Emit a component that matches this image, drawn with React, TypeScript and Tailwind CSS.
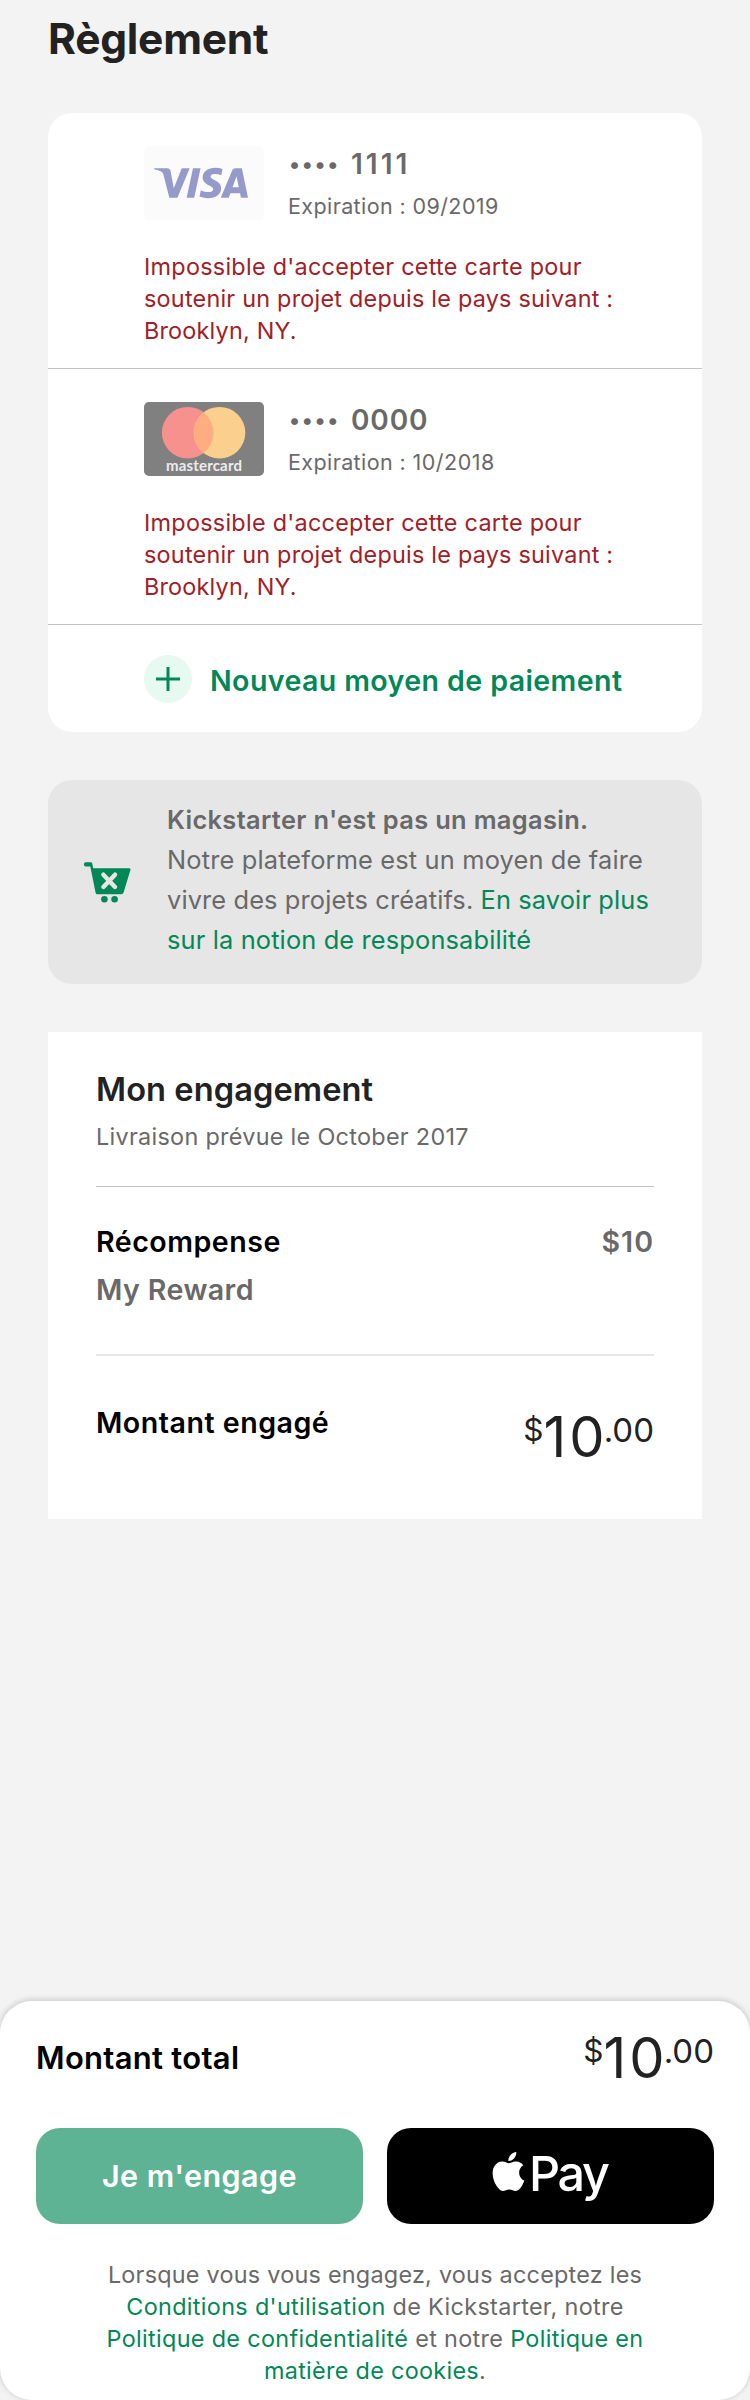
import React from "react";
import { SiApple, SiVisa } from "react-icons/si";

function VisaCard() {
  return (
    <div className="flex h-[74px] w-[120px] shrink-0 items-center justify-center rounded-[5px] bg-[#fbfbfb]">
      <SiVisa size={94} className="translate-x-[-3px] text-[#959aca]" />
    </div>
  );
}

function MastercardCard() {
  return (
    <svg width="120" height="74" viewBox="0 0 120 74" className="shrink-0">
      <rect width="120" height="74" rx="5" fill="#808080" />
      <circle cx="43.7" cy="30.7" r="25.8" fill="#f7918e" />
      <circle cx="75.5" cy="30.7" r="25.8" fill="#fbcf8d" />
      <path d="M59.6 10.4 A25.8 25.8 0 0 1 59.6 51 A25.8 25.8 0 0 1 59.6 10.4 Z" fill="#ffad80" />
      <text
        x="22"
        y="69"
        textLength="76"
        fill="#ececec"
        className="font-['Lato','Inter',sans-serif] text-[15px] font-bold"
      >
        mastercard
      </text>
    </svg>
  );
}

function CartIcon() {
  return (
    <svg width="47" height="41" viewBox="0 0 47 41" className="mt-[82px] shrink-0">
      <path
        d="M1.7 0.3 H6.8 Q8 0.3 8.3 1.5 L9.2 6.2 H45.2 Q47 6.2 46.5 7.8 L39.6 30.4 Q39 32.2 37.4 32.2 H13.4 Q11.9 32.2 11.6 30.7 L6.3 4.4 H1.7 Q0 4.4 0 2.7 V2 Q0 0.3 1.7 0.3 Z"
        fill="#028858"
      />
      <path d="M19.4 12.7 L31 25 M31 12.7 L19.4 25" stroke="#e6e6e6" strokeWidth="4.4" strokeLinecap="round" />
      <circle cx="20.4" cy="37.2" r="3.3" fill="#028858" />
      <circle cx="30.6" cy="37.2" r="3.3" fill="#028858" />
    </svg>
  );
}

function PaymentMethod({
  logo,
  digits,
  digitsClass,
  expiration,
}: {
  logo: React.ReactNode;
  digits: string;
  digitsClass: string;
  expiration: React.ReactNode;
}) {
  return (
    <div className="h-[256px] border-b border-[#c0c0c0] pt-[33px] pl-24">
      <div className="flex h-[74px] gap-6">
        {logo}
        <div className="pt-px text-[#696969]">
          <div className="flex text-[28px] leading-[34px] font-semibold">
            <span className="w-[63px] pl-px text-[22px] tracking-[1.7px]">••••</span>
            <span className={digitsClass}>{digits}</span>
          </div>
          <div className="mt-[11px] text-[21.5px] leading-[28px] tracking-[0.4px]">Expiration : {expiration}</div>
        </div>
      </div>
      <p className="mt-[31px] text-[23.4px] leading-[32px] text-[#a12027]">
        <span className="tracking-[0.27px]">Impossible d'accepter cette carte pour</span>
        <br />
        <span className="tracking-[0.23px]">soutenir un projet depuis le pays suivant :</span>
        <br />
        <span className="tracking-[0.2px]">Brooklyn, NY.</span>
      </p>
    </div>
  );
}

function Amount() {
  return (
    <div className="flex items-start text-[#222222]">
      <span className="mt-[4px] text-[31.5px] leading-[32px]">$</span>
      <span className="text-[56px] leading-[54px]">
        <span className="tracking-[3px]">1</span>0
      </span>
      <span className="mt-[4px] -ml-px text-[33px] leading-[32px]">.00</span>
    </div>
  );
}

export default function App() {
  return (
    <div className="flex h-[2400px] w-[750px] flex-col overflow-hidden bg-[#f3f3f3] font-['Inter','Liberation_Sans',sans-serif]">
      <main className="flex-1 px-12 pt-[10px]">
        <h1 className="text-[42.5px] leading-[57px] font-bold tracking-[-0.24px] text-[#222222]">Règlement</h1>

        <section className="mt-[46px] h-[619px] rounded-[24px] bg-white">
          <PaymentMethod logo={<VisaCard />} digits="1111" digitsClass="tracking-[3px]" expiration="09/2019" />
          <PaymentMethod
            logo={<MastercardCard />}
            digits="0000"
            digitsClass="tracking-[0.86px]"
            expiration={<span className="tracking-[0.5px]">10/2018</span>}
          />
          <div className="flex gap-[17px] pt-[30px] pl-24 text-[#028858]">
            <div className="flex size-12 items-center justify-center rounded-full bg-[#e6faf1]">
              <svg width="24" height="24" viewBox="0 0 24 24">
                <path d="M12 0 V24 M0 12 H24" stroke="currentColor" strokeWidth="3" />
              </svg>
            </div>
            <span className="mt-[9px] ml-px text-[28.6px] leading-[34px] font-semibold tracking-[0.38px]">
              Nouveau moyen de paiement
            </span>
          </div>
        </section>

        <section className="mt-12 flex h-[204px] rounded-[24px] bg-[#e6e6e6] pl-9">
          <CartIcon />
          <p className="pt-5 pl-9 text-[25.4px] leading-[40px] whitespace-nowrap text-[#696969]">
            <span className="font-semibold tracking-[0.34px]">Kickstarter n'est pas un magasin.</span>
            <br />
            <span className="tracking-[0.16px]">Notre plateforme est un moyen de faire</span>
            <br />
            <span className="tracking-[0.12px]">
              vivre des projets créatifs. <a className="text-[#028858]">En savoir plus</a>
            </span>
            <br />
            <a className="tracking-[0.14px] text-[#028858]">sur la notion de responsabilité</a>
          </p>
        </section>

        <section className="mt-12 h-[487px] bg-white px-12 pt-[37px]">
          <h2 className="text-[32.6px] leading-[40px] font-semibold tracking-[0.08px] text-[#222222]">Mon engagement</h2>
          <p className="mt-3 text-[23.4px] leading-[32px] tracking-[0.3px] text-[#696969]">
            Livraison prévue le October 2017
          </p>
          <div className="mt-[33px] h-px bg-[#c0c0c0]" />
          <div className="mt-[38px] flex justify-between text-[28.6px] leading-[34px] font-semibold">
            <span className="tracking-[0.5px] text-black">Récompense</span>
            <span className="tracking-[1px] text-[#696969]">$10</span>
          </div>
          <div className="mt-[14px] text-[28.6px] leading-[34px] font-semibold tracking-[0.4px] text-[#696969]">
            My Reward
          </div>
          <div className="mt-[47px] h-[2px] bg-[#e6e6e6]" />
          <div className="mt-[50px] flex items-start justify-between">
            <span className="text-[28.6px] leading-[34px] font-semibold tracking-[0.5px] text-black">Montant engagé</span>
            <div className="pt-1">
              <Amount />
            </div>
          </div>
        </section>
      </main>

      <footer className="h-[399px] rounded-[32px] bg-white px-9 shadow-[0_-1px_6px_rgba(0,0,0,0.2)]">
        <div className="flex h-[127px] items-start justify-between pt-[30px]">
          <span className="pt-[8px] text-[31px] leading-[38px] font-semibold tracking-[0.29px] text-black">
            Montant total
          </span>
          <Amount />
        </div>
        <div className="grid grid-cols-2 gap-6">
          <button className="h-24 rounded-[24px] bg-[#5fb395] text-[30.5px] leading-[36px] font-semibold tracking-[0.45px] text-white">
            Je m'engage
          </button>
          <button
            className="flex h-24 items-start rounded-[24px] bg-black pt-6 pl-[102px] text-white"
            aria-label="Apple Pay"
          >
            <SiApple size={39} />
            <span className="-mt-[2px] ml-px text-[48.5px] leading-[48px] font-medium tracking-[-2.4px]">Pay</span>
          </button>
        </div>
        <p className="mt-[35px] text-center text-[23.4px] leading-[32px] whitespace-nowrap text-[#696969]">
          <span className="tracking-[0.24px]">Lorsque vous vous engagez, vous acceptez les</span>
          <br />
          <span className="tracking-[0.33px]">
            <a className="text-[#028858]">Conditions d'utilisation</a> de Kickstarter, notre
          </span>
          <br />
          <span className="tracking-[0.33px]">
            <a className="text-[#028858]">Politique de confidentialité</a> et notre{" "}
            <a className="text-[#028858]">Politique en</a>
          </span>
          <br />
          <span className="tracking-[0.3px]">
            <a className="text-[#028858]">matière de cookies</a>.
          </span>
        </p>
      </footer>
    </div>
  );
}
